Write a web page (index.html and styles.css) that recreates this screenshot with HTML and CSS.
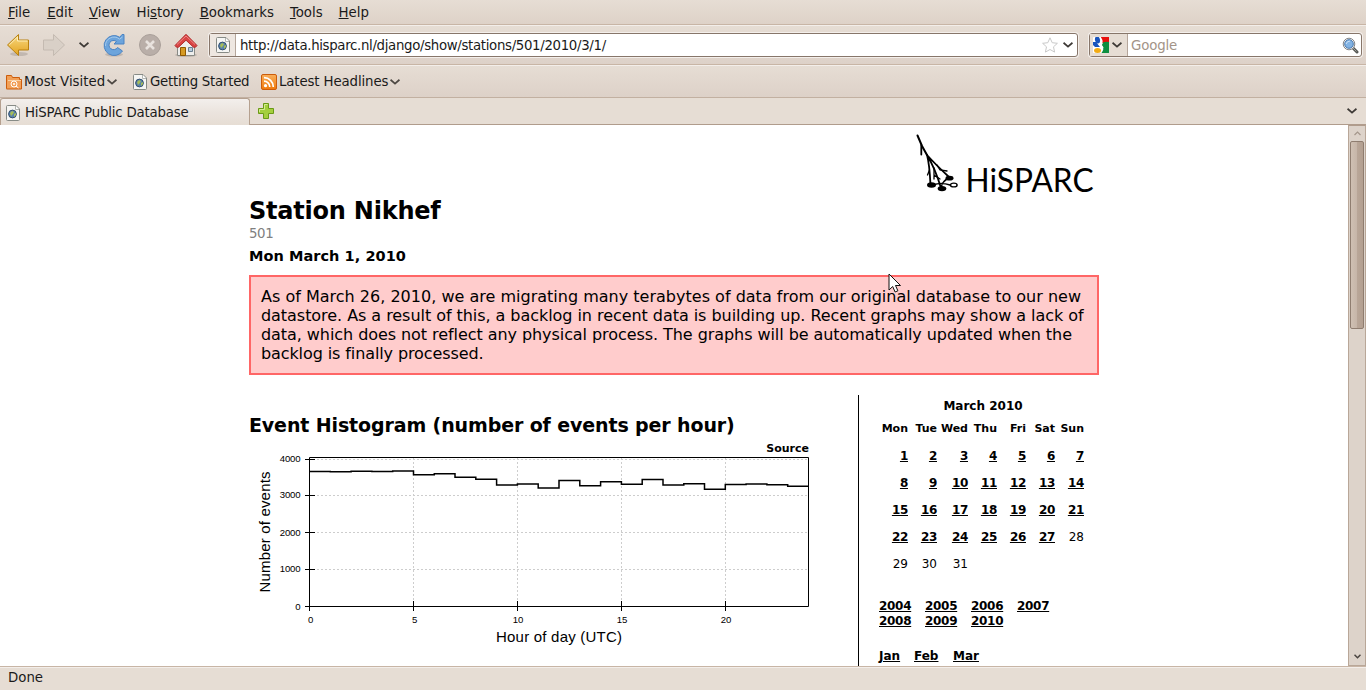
FILE: index.html
```html
<!DOCTYPE html>
<html lang="en">
<head>
<meta charset="utf-8">
<title>HiSPARC Public Database</title>
<link rel="stylesheet" href="styles.css">
</head>
<body>
<svg width="0" height="0" class="defs">
  <defs>
    <linearGradient id="gold" x1="0" y1="0" x2="0" y2="1"><stop offset="0" stop-color="#f8d982"/><stop offset="1" stop-color="#e3a31f"/></linearGradient>
    <linearGradient id="orange" x1="0" y1="0" x2="0" y2="1"><stop offset="0" stop-color="#f9b05c"/><stop offset="1" stop-color="#f07a0c"/></linearGradient>
    <symbol id="page" viewBox="0 0 16 16">
      <path d="M1.500 1.500q0-1 1-1h8.500l3.500 3.500v10.500q0 1-1 1h-11q-1 0-1-1z" fill="#f6f6f4" stroke="#878b86"/>
      <path d="M10.500 1v3.500h3.500" fill="#fff" stroke="#b4b6b2"/>
      <circle cx="7.500" cy="9" r="3.900" fill="#5a83ad" stroke="#34506f"/>
      <path d="M5 8l2-2 2 1-1 2-2 2zM9 9l2-1v2l-2 2z" fill="#a5bd59"/>
    </symbol>
    <symbol id="chev" viewBox="0 0 10 6"><path d="M.5.800L5 4.600 9.500.800" fill="none" stroke="currentColor" stroke-width="1.800"/></symbol>
  </defs>
</svg>

<nav class="menubar">
  <span><u>F</u>ile</span><span><u>E</u>dit</span><span><u>V</u>iew</span><span>Hi<u>s</u>tory</span><span><u>B</u>ookmarks</span><span><u>T</u>ools</span><span><u>H</u>elp</span>
</nav>

<div class="toolbar">
  <svg class="tool back" width="24" height="24" viewBox="0 0 24 24"><ellipse cx="13" cy="21" rx="9" ry="2" fill="#0002"/><path d="M1.500 12L12.500 1.500V7H22.500V17H12.500V22.500z" fill="url(#gold)" stroke="#b88110"/><path d="M3.200 12l8.300-8V8H21.500" fill="none" stroke="#fdeeb8"/></svg>
  <svg class="tool fwd" width="24" height="24" viewBox="0 0 24 24"><path d="M22.500 12L11.500 1.500V7H1.500V17H11.500V22.500z" fill="#d9d0c7" stroke="#c4bab1"/></svg>
  <svg class="drop" width="10" height="6"><use href="#chev"/></svg>
  <svg class="tool reload" width="24" height="24" viewBox="0 0 24 24"><ellipse cx="12" cy="21.500" rx="9" ry="2" fill="#0002"/><path d="M17.800 4.300A10 10 0 1 0 20.500 18L15.500 14.500A4.600 4.600 0 1 1 14.500 8.500L12 11H22V1.500H20z" fill="#6ca4dc" stroke="#4a83c3"/><path d="M3.500 13A8.500 8.500 0 0 1 17.500 6.200L20.500 4" fill="none" stroke="#a3c9ec"/></svg>
  <svg class="tool stop" width="24" height="24" viewBox="0 0 24 24"><circle cx="12" cy="12" r="10.500" fill="#b9aea8" stroke="#aaa09a"/><path d="M8 8l8 8M16 8l-8 8" stroke="#e8e2de" stroke-width="2.600"/></svg>
  <svg class="tool home" width="24" height="24" viewBox="0 0 24 24"><ellipse cx="12" cy="22" rx="11" ry="2" fill="#0002"/><path d="M3.500 12L12 5l8.500 7v10.500h-17z" fill="#eeeeec" stroke="#888a85"/><path d="M6.500 22.500v-8h5v8z" fill="#d59a23" stroke="#8f5902"/><path d="M14.500 14.500h4v4h-4z" fill="#b6cbdb" stroke="#6a7f91"/><path d="M1 12.500L12 1.300 23 12.500l-1.500 1.700h-2L12 7.200l-7.500 7h-2z" fill="#d94444" stroke="#b02c2c"/><path d="M3 11.500L12 3l9 8.500" fill="none" stroke="#ef8585"/></svg>
  <div class="field url">
    <span class="site"><svg width="16" height="16"><use href="#page"/></svg></span>
    <span class="addr">http://data.hisparc.nl/django/show/stations/501/2010/3/1/</span>
    <svg class="star" width="16" height="16" viewBox="0 0 16 16"><path d="M8 .8l2.200 4.900 5.200.6-3.900 3.500 1.100 5.300L8 12.500l-4.600 2.600 1.100-5.300L.6 6.300l5.200-.6z" fill="#fff" stroke="#c9c9c9"/></svg>
    <svg class="dd" width="10" height="6"><use href="#chev"/></svg>
  </div>
  <div class="field search">
    <span class="engine"><svg width="16" height="16" viewBox="0 0 16 16"><rect width="16" height="16" rx="1" fill="#fff"/><path d="M8 0h8v6H9z" fill="#e8100c"/><path d="M10 5.500Q12 4.500 16 5v10.500q0 .5-.5.500H8.500q3-4 1-6.500-1-2 .5-4z" fill="#0e8f40"/><path d="M0 5h3l4 5H2L0 8z" fill="#1854bd"/><ellipse cx="4.500" cy="3" rx="2.500" ry="3.500" fill="#1854bd" transform="rotate(-12 4.500 3)"/><ellipse cx="4.500" cy="13.500" rx="3.500" ry="2.500" fill="#f2ab13"/><path d="M8 1.500Q10 5 7.500 7.500L10 11" fill="none" stroke="#fff" stroke-width="1.500"/></svg><svg width="10" height="6"><use href="#chev"/></svg></span>
    <span class="hint">Google</span>
    <svg class="mag" width="17" height="17" viewBox="0 0 17 17"><path d="M10 10l5 5" stroke="#555753" stroke-width="3" stroke-linecap="round"/><path d="M11 11l3.500 3.500" stroke="#a0a29d"/><circle cx="7" cy="7" r="5.800" fill="#eee" stroke="#85878a"/><circle cx="7" cy="7" r="4.300" fill="#82b3e4" stroke="#4c7cb1"/><path d="M4 7q1-3 4-3" stroke="#cfe3f7" fill="none"/></svg>
  </div>
</div>

<div class="bookmarks">
  <svg class="bico" width="16" height="16" viewBox="0 0 16 16"><path d="M.5 14.500v-13h5l1 2h7v2h2v9.500H.5z" fill="#f2a057" stroke="#cc5c0b"/><path d="M2 6.500h13" stroke="#fbd0a0"/><circle cx="8" cy="10" r="3" fill="none" stroke="#fff"/><circle cx="8" cy="10" r="1" fill="#fff"/><path d="M10 12l2.500 2" stroke="#fff"/></svg>
  <span class="b1">Most Visited</span><svg class="bch" width="10" height="6"><use href="#chev"/></svg>
  <svg class="bico i2" width="16" height="16"><use href="#page"/></svg>
  <span class="b2">Getting Started</span>
  <svg class="bico i3" width="16" height="16" viewBox="0 0 16 16"><rect x=".5" y=".5" width="15" height="15" rx="1.500" fill="url(#orange)" stroke="#cc5c0b"/><circle cx="4.500" cy="11.700" r="1.600" fill="#fff"/><path d="M3 7.200a5.800 5.800 0 0 1 5.800 5.800M3 3.700a9.300 9.300 0 0 1 9.300 9.300" fill="none" stroke="#fff" stroke-width="1.700"/></svg>
  <span class="b3">Latest Headlines</span><svg class="bch" width="10" height="6"><use href="#chev"/></svg>
</div>

<div class="tabs">
  <div class="tab"><svg width="16" height="16"><use href="#page"/></svg><span>HiSPARC Public Database</span></div>
  <svg class="plus" width="16" height="16" viewBox="0 0 16 16"><path d="M5.500.500h5v5h5v5h-5v5h-5v-5h-5v-5h5z" fill="#a4cf3d" stroke="#6b9a16"/><path d="M6.500 6.500v-5h3M1.500 9V6.500h5" fill="none" stroke="#d4ec96"/></svg>
  <svg class="all" width="10" height="6"><use href="#chev"/></svg>
</div>

<div class="view">
  <main class="page">
    <header class="head">
      <div class="titles">
        <h1><span>Station Nikhef</span></h1>
        <div class="num">501</div>
        <h3>Mon March 1, 2010</h3>
      </div>
      <svg class="logo" width="184" height="70" viewBox="915 130 184 70">
        <g fill="none" stroke="#000" stroke-linecap="round">
          <path d="M917.500 135.500L922 146l5 9" stroke-width="2"/>
          <path d="M921.300 145v9.500M927 155q2.500 9 3.500 30M927 155q8 13 14 33M927 155q8 9 22 22" stroke-width="1.800"/>
          <path d="M929.500 170l-2 5M934 168v11M934 175l6 4M937 165l3 5 7 1" stroke-width="1.300"/>
          <path d="M933 185q8-3 17 0M949 178q-7 3-8 10" stroke-width="1.600"/>
          <ellipse cx="953.800" cy="185" rx="3.300" ry="1.900" stroke-width="1.400"/>
        </g>
        <ellipse cx="931.500" cy="185" rx="4.500" ry="2.700"/><ellipse cx="942" cy="188.600" rx="4.300" ry="2.600"/><ellipse cx="949.500" cy="178.200" rx="4" ry="2.400"/>
        <text class="brand" x="965.500" y="191.700" textLength="128" lengthAdjust="spacingAndGlyphs">HiSPARC</text>
      </svg>
    </header>
    <div class="notice"><div class="l1">As of March 26, 2010, we are migrating many terabytes of data from our original database to our new</div><div class="l2">datastore. As a result of this, a backlog in recent data is building up. Recent graphs may show a lack of</div><div class="l3">data, which does not reflect any physical process. The graphs will be automatically updated when the</div><div class="l4">backlog is finally processed.</div></div>
    <div class="cols">
      <section class="plot">
        <h2>Event Histogram (number of events per hour)</h2>
        <div class="source">Source</div>
        <svg class="chart" width="560" height="200" viewBox="249 450 560 200">
          <g fill="none" stroke="#cdcdcd" stroke-dasharray="2 2">
            <path d="M309 459.500H808M309 495.500H808M309 532.500H808M309 569.500H808"/>
            <path d="M413.500 458V606M517.500 458V606M621.500 458V606M725.500 458V606"/>
          </g>
          <path d="M309.500 457.500H808.500V606.500H309.500z" fill="none" stroke="#000"/>
          <path d="M305 459.500h10M305 495.500h10M305 532.500h10M305 569.500h10M305 606.500h10M309.500 601v10M413.500 601v10M517.500 601v10M621.500 601v10M725.500 601v10" stroke="#000"/>
          <path d="M309.500 471.500H330.300V471.800H351.100V471.200H371.900V471.600H392.700V471H413.500V474.800H434.300V473.700H455V477.300H475.800V479.200H496.600V485H517.400V484H538.200V488H559V480.500H579.800V485.700H600.600V481.700H621.400V484.300H642.200V479.400H663V485H683.800V483.700H704.500V489.200H725.300V484.500H746.100V484H766.900V484.700H787.700V486.300H808.500" fill="none" stroke="#000" stroke-width="1.500"/>
          <g class="ticks" text-anchor="end"><text x="300.500" y="462">4000</text><text x="300.500" y="498">3000</text><text x="300.500" y="536">2000</text><text x="300.500" y="572">1000</text><text x="300.500" y="610">0</text></g>
          <g class="ticks" text-anchor="middle"><text x="310.500" y="623">0</text><text x="414.500" y="623">5</text><text x="518" y="623">10</text><text x="622" y="623">15</text><text x="726" y="623">20</text></g>
          <g class="axis"><text x="496" y="642" textLength="126">Hour of day (UTC)</text><text transform="translate(270 592.500) rotate(-90)" textLength="121">Number of events</text></g>
        </svg>
      </section>
      <aside class="side">
        <div class="month">March 2010</div>
        <div class="cal">
          <i>Mon</i><i>Tue</i><i>Wed</i><i>Thu</i><i>Fri</i><i>Sat</i><i>Sun</i>
          <a>1</a><a>2</a><a>3</a><a>4</a><a>5</a><a>6</a><a>7</a>
          <a>8</a><a>9</a><a>10</a><a>11</a><a>12</a><a>13</a><a>14</a>
          <a>15</a><a>16</a><a>17</a><a>18</a><a>19</a><a>20</a><a>21</a>
          <a>22</a><a>23</a><a>24</a><a>25</a><a>26</a><a>27</a><span>28</span>
          <span>29</span><span>30</span><span>31</span>
        </div>
        <div class="years"><a>2004</a><a>2005</a><a>2006</a><a>2007</a><a>2008</a><a>2009</a><a>2010</a></div>
        <div class="months"><a class="jan">Jan</a><a class="feb">Feb</a><a>Mar</a></div>
      </aside>
    </div>
  </main>
  <div class="scroll">
    <svg class="up" width="7" height="5" viewBox="0 0 7 5"><path d="M.5 4L3.500 1l3 3" fill="none" stroke="#a4968b" stroke-width="1.200"/></svg>
    <div class="thumb"></div>
    <svg class="down" width="7" height="5" viewBox="0 0 7 5"><path d="M.5.800L3.500 3.800l3-3" fill="none" stroke="#4a4540" stroke-width="1.500"/></svg>
  </div>
</div>
<footer class="status">Done</footer>
<svg class="cursor" width="14" height="21" viewBox="0 0 14 21"><path d="M1 1v16l3.700-3.500 2.400 5.500 2.800-1.200-2.400-5.300h5z" fill="#fff" stroke="#111"/></svg>
</body>
</html>
```
FILE: styles.css
```css
* { box-sizing: border-box; }
body { margin: 0; width: 1366px; height: 690px; overflow: hidden; display: flex; flex-direction: column; position: relative; background: #e6ddd4; color: #1a1a1a; font: 13.33px/18px "DejaVu Sans", sans-serif; }
svg { display: block; flex: none; }
.defs { position: absolute; }
span { white-space: nowrap; }
.menubar { height: 25px; display: flex; gap: 16px; padding: 4px 8px 0; background: linear-gradient(#e6ddd4, #ded2c8); border-bottom: 1px solid #c8b5a5; }
.menubar span:first-child { margin-right: 1px; }
.menubar span { letter-spacing: -.03px; }
.menubar u { text-underline-offset: 1px; }
.toolbar { height: 40px; display: flex; align-items: center; padding: 0 4px 0 6px; background: linear-gradient(#e6ddd4, #ddd1c8); border-top: 1px solid #f3eeea; border-bottom: 1px solid #c8b5a5; }
.tool { margin-right: 12px; }
.drop { color: #3d3935; margin: 0 13px 0 1px; }
.field { height: 24px; display: flex; align-items: center; background: #fff; border: 1px solid #87766a; border-radius: 3px; box-shadow: 0 0 0 1px #f4efeb; color: #3d3935; }
.url { width: 869px; margin-left: -1px; }
.site { width: 26px; height: 22px; padding: 3px 5px; background: #eee7e1; border-right: 1px solid #b5a69b; }
.addr { color: #1a1a1a; margin-left: 4px; flex: 1; letter-spacing: -.33px; padding-top: 1px; }
.star { margin-right: 5px; }
.dd { margin-right: 4px; }
.search { width: 273px; margin-left: 11px; }
.engine { width: 38px; height: 22px; display: flex; align-items: center; gap: 3px; padding-left: 3px; background: #e6ddd4; border-right: 1px solid #b5a69b; }
.hint { flex: 1; margin-left: 3px; color: #a39488; padding-top: 1px; letter-spacing: -.15px; }
.mag { margin-right: 2px; }
.bookmarks { height: 33px; display: flex; align-items: center; padding-left: 6px; background: linear-gradient(#e6ddd4, #ddd1c8); border-top: 1px solid #f3eeea; border-bottom: 1px solid #c2b0a1; }
.b1 { width: 83px; margin-left: 2px; }
.bch { color: #4c4742; }
.i2 { margin-left: 15px; }
.b2 { width: 100px; margin-left: 2px; letter-spacing: -.25px; }
.i3 { margin-left: 11px; }
.b3 { width: 111px; margin-left: 2px; letter-spacing: -.12px; }
.tabs { height: 27px; display: flex; align-items: center; border-bottom: 1px solid #b09c8c; }
.tab { width: 250px; height: 27px; display: flex; align-items: center; gap: 4px; padding: 2px 0 0 4px; background: linear-gradient(#f3efec, #ebe4de 50%, #e6ddd4); border: 1px solid #b5a08f; border-bottom: 0; border-radius: 3px 3px 0 0; letter-spacing: -.19px; }
.plus { margin-left: 8px; }
.all { margin-left: auto; margin-right: 9px; color: #3d3935; }
.view { height: 541px; display: flex; overflow: hidden; background: #fff; color: #000; }
.page { flex: 1; padding: 0 249px; }
.head { height: 150px; display: flex; justify-content: space-between; }
.logo { margin: 5px 0 0; }
.brand { font: 33.500px Lato, sans-serif; }
h1, h2, h3 { margin: 0; }
h1 { margin-top: 71px; font-size: 24px; line-height: 30px; white-space: nowrap; letter-spacing: -.22px; }
.num { color: #808080; line-height: 17px; margin-top: -1px; letter-spacing: -.4px; }
h3 { font-size: 14.500px; line-height: 18px; margin-top: 5px; letter-spacing: .05px; }
.notice { width: 850px; height: 100px; padding: 10px; border: 2px solid #f66; background: #fcc; font-size: 16px; line-height: 19px; white-space: nowrap; }
.l1 { letter-spacing: .01px; }
.l2 { letter-spacing: -.05px; }
.l3 { letter-spacing: -.065px; }
.l4 { letter-spacing: -.1px; }
.cols { display: flex; margin-top: 20px; height: 400px; width: 850px; }
.plot { width: 609px; padding-top: 18px; }
h2 { font-size: 19px; line-height: 24px; white-space: nowrap; letter-spacing: -.12px; }
.source { width: 560px; height: 13px; line-height: 24px; text-align: right; font-size: 11px; font-weight: bold; }
.ticks { font: 9.600px "Liberation Sans", Arial, sans-serif; letter-spacing: -.15px; }
.axis { font: 15px "Liberation Sans", Arial, sans-serif; }
.side { width: 241px; border-left: 1px solid #000; padding-left: 20px; font-size: 12px; }
.month { width: 208px; padding-top: 2px; text-align: center; font-weight: bold; }
.cal { display: grid; grid-template-columns: 29px 29px 31px 29px 29px 29px 29px; grid-template-rows: 28px; grid-auto-rows: 27px; text-align: right; line-height: 27px; height: 176px; }
.cal i { display: block; font: bold 11px/27px "DejaVu Sans", sans-serif; }
a { font-weight: bold; text-decoration: underline; letter-spacing: -.3px; }
.years { display: grid; grid-template-columns: repeat(4, 46px); line-height: 15px; margin-top: 8px; }
.years a { justify-self: start; }
.months { display: flex; line-height: 15px; margin-top: 20px; }
.months a { letter-spacing: 0; }
.jan { width: 35px; }
.feb { width: 39px; }
.scroll { width: 18px; display: flex; flex-direction: column; align-items: center; background: #ddd3ca; border: 1px solid #b9a798; border-top-color: #b09c8c; }
.up { margin-top: 5px; }
.thumb { width: 14px; height: 188px; margin-top: 5px; border: 1px solid #8f7d70; border-radius: 2px; background: linear-gradient(90deg, #cfc0b3, #c6b5a8 50%, #b9a698 50%, #b3a091); }
.down { margin: auto 0 6px; }
.status { height: 24px; border-top: 1px solid #c8b5a5; padding: 2px 8px; box-shadow: inset 0 1px #f3eeea; }
.cursor { position: absolute; left: 888px; top: 273px; }
```
